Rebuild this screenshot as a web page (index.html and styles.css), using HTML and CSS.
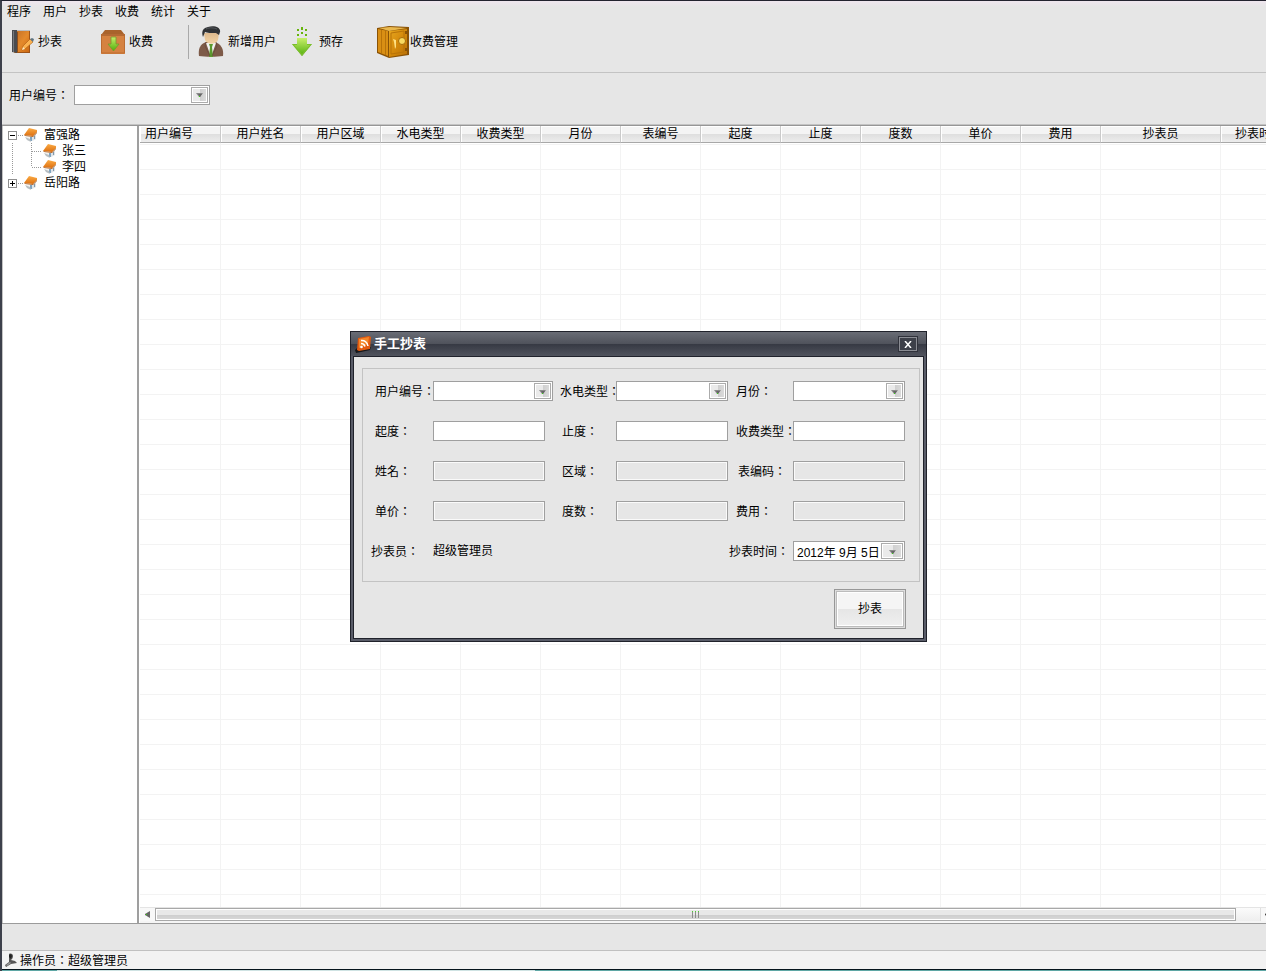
FILE: index.html
```html
<!DOCTYPE html>
<html lang="zh-CN">
<head>
<meta charset="utf-8">
<title>手工抄表</title>
<link rel="stylesheet" href="styles.css">
</head>
<body>
<svg class="defs" width="0" height="0" aria-hidden="true">
  <defs>
    <linearGradient id="roof" x1="0" y1="0" x2="0" y2="1"><stop offset="0" stop-color="#fbab45"/><stop offset="1" stop-color="#dd6f10"/></linearGradient>
    <linearGradient id="leather" x1="0" y1="0" x2="1" y2="1"><stop offset="0" stop-color="#c06d26"/><stop offset=".5" stop-color="#e48a2c"/><stop offset="1" stop-color="#c9640f"/></linearGradient>
    <linearGradient id="leaf" x1="0" y1="0" x2="0" y2="1"><stop offset="0" stop-color="#c8ef6a"/><stop offset="1" stop-color="#4fae0a"/></linearGradient>
    <linearGradient id="gold" x1="0" y1="0" x2="1" y2="1"><stop offset="0" stop-color="#e8a820"/><stop offset=".5" stop-color="#d48a0c"/><stop offset="1" stop-color="#b86f05"/></linearGradient>
    <linearGradient id="face" x1="0" y1="0" x2="0" y2="1"><stop offset="0" stop-color="#ddb98d"/><stop offset="1" stop-color="#f3d3a4"/></linearGradient>
    <symbol id="house" viewBox="0 0 14 15">
      <path d="M2 8l6 1 4-4v6l-4 2-5-1z" fill="#f3f3f1"/>
      <path d="M8 9l4-4v6l-4 2z" fill="#dfe4e8"/>
      <path d="M6 9h2v4H6z" fill="#7fa3c0"/>
      <path d="M10 8h1v3h-1z" fill="#8398aa"/>
      <path d="M1 9l2 3 4 2-1-3z" fill="#b9bfc2"/>
      <path d="M5 0l8 2v2L9 8 0 7z" fill="url(#roof)"/>
      <path d="M0 7l9 1 4-4v1L9 9 1 8z" fill="#b4682a"/>
    </symbol>
    <symbol id="drop" viewBox="0 0 7 5">
      <path d="M0 0h7L4 4H3z" fill="#8a8a8a"/><path d="M2 1h4L4 4z" fill="#666"/><path d="M3 3h1v1H3z" fill="#35d411"/>
    </symbol>
  </defs>
</svg>

<div class="app">
  <nav class="menu">
    <button type="button">程序</button>
    <button type="button">用户</button>
    <button type="button">抄表</button>
    <button type="button">收费</button>
    <button type="button">统计</button>
    <button type="button">关于</button>
  </nav>

  <div class="toolbar">
    <button type="button" class="tool tool-read">
      <svg width="24" height="26" viewBox="0 0 24 26">
        <path d="M2 1h17v2H4z" fill="#b9bcc0"/>
        <path d="M4 2h15v22H3z" fill="url(#leather)"/>
        <path d="M18 2h1v22H4v-1h14z" fill="#9d5418"/>
        <path d="M1 1h5v23l-5-1z" fill="#4a4c50"/>
        <path d="M2.500 2v21" stroke="#77797d" fill="none"/>
        <path d="M6.500 3v20" stroke="#8a4e20" fill="none"/>
        <path d="M19 10l3 3-8 7-3 1 1-4z" fill="#fbb250" stroke="#a85a10" stroke-width=".6"/>
        <path d="M19 10l2-1 2 1-1 3z" fill="#5f7482"/>
        <path d="M11 21l1-3 2 2z" fill="#fde9c4"/>
      </svg>
      <span>抄表</span>
    </button>
    <button type="button" class="tool tool-charge">
      <svg width="24" height="24" viewBox="0 0 24 24">
        <path d="M4 0h16l4 5H0z" fill="#a9632c"/>
        <path d="M0 5h24v19H0z" fill="#d58241"/>
        <path d="M0 4h24v2H0z" fill="#b56a33"/>
        <path d="M1 23h22M.5 6v17M23.500 6v17" stroke="#bd6c31" fill="none"/>
        <path d="M10 7h5v7h3l-5.500 7L7 14h3z" fill="url(#leaf)" stroke="#76972d" stroke-width=".8"/>
      </svg>
      <span>收费</span>
    </button>
    <span class="tool-sep"></span>
    <button type="button" class="tool tool-user">
      <svg width="26" height="32" viewBox="0 0 26 32">
        <path d="M1 30c-1-7 1-12 7-14h9c6 2 9 7 8 14-6 1-18 1-24 0z" fill="#7d5a48"/>
        <path d="M8 17l5 14 5-14z" fill="#f1f1ef"/>
        <path d="M11 18h4l-1 3 1 10h-4l1-10z" fill="#5b9a2e"/>
        <path d="M8 16l-1 4 5 10M18 16l1 4-5 10" stroke="#64463a" stroke-width=".7" fill="none"/>
        <path d="M6 7h15l-1 7c-2 5-11 5-13 0z" fill="url(#face)"/>
        <path d="M5 11C3 5 5 2 10 1c7-2 13 1 12 5l-1 3-3-2c-5 0-9 0-11-1z" fill="#303235"/>
        <path d="M8 3c4-2 8-1 11 0" stroke="#55585c" fill="none"/>
      </svg>
      <span>新增用户</span>
    </button>
    <button type="button" class="tool tool-deposit">
      <svg width="20" height="30" viewBox="0 0 20 30">
        <path d="M9 0h2v3H9zM5 2h2v2H5zM13 2h2v2h-2zM9 5h2v2H9zM5 7h2v2H5zM13 7h2v2h-2z" fill="#67b40c"/>
        <path d="M5 11h10v6h5L10 29 0 17h5z" fill="url(#leaf)"/>
        <path d="M0 17h5v1H2l8 9 8-9h-3v-1h5L10 29z" fill="#7cbd2f"/>
      </svg>
      <span>预存</span>
    </button>
    <button type="button" class="tool tool-manage">
      <svg width="33" height="32" viewBox="0 0 33 32">
        <path d="M0 2l12-2 20 1v28l-20 3L0 27z" fill="#8a5205"/>
        <path d="M1 3l10 2v25l-10-4z" fill="#d98f14"/>
        <path d="M4.500 4v23M8.500 5v24" stroke="#b87309" fill="none"/>
        <path d="M2 2l11-1 17 1-18 3z" fill="#e9b84e"/>
        <path d="M12 5l18-2v25l-18 3z" fill="url(#gold)"/>
        <path d="M14 7l13-2v21l-13 2z" fill="none" stroke="#b87309"/>
        <circle cx="25" cy="15" r="3.500" fill="#f8da62" stroke="#a66a08"/>
        <path d="M16 13l3 1v7l-1 2-1-7z" fill="#ffe083"/>
        <path d="M28 5h4v3h-4zM28 22h4v3h-4z" fill="#8a5205"/>
      </svg>
      <span>收费管理</span>
    </button>
  </div>

  <div class="filter">
    <label for="userNo">用户编号：</label>
    <span class="combo combo-filter"><select id="userNo"><option></option></select><span class="drop"><svg width="7" height="5"><use href="#drop"/></svg></span></span>
  </div>

  <main class="workspace">
    <aside class="tree">
      <div class="node">
        <button type="button" class="toggle" aria-label="折叠"><svg width="7" height="7"><path d="M1 3.500h5" stroke="#000"/></svg></button>
        <svg class="dash" width="7" height="1"><path d="M1 .5h6" stroke="#999" stroke-dasharray="1 1"/></svg>
        <svg width="14" height="15"><use href="#house"/></svg><span>富强路</span>
      </div>
      <div class="node child">
        <svg width="40" height="16"><path d="M9.500 0v16M28.500 0v16M29 8.500h10" stroke="#999" stroke-dasharray="1 1" fill="none"/></svg>
        <svg width="14" height="15"><use href="#house"/></svg><span>张三</span>
      </div>
      <div class="node child">
        <svg width="40" height="16"><path d="M9.500 0v16M28.500 0v8M29 8.500h10" stroke="#999" stroke-dasharray="1 1" fill="none"/></svg>
        <svg width="14" height="15"><use href="#house"/></svg><span>李四</span>
      </div>
      <div class="node">
        <button type="button" class="toggle" aria-label="展开"><svg width="7" height="7"><path d="M1 3.500h5M3.500 1v5" stroke="#000"/></svg></button>
        <svg class="dash" width="7" height="1"><path d="M1 .5h6" stroke="#999" stroke-dasharray="1 1"/></svg>
        <svg width="14" height="15"><use href="#house"/></svg><span>岳阳路</span>
      </div>
    </aside>

    <section class="records">
      <div class="sheet">
        <table>
          <colgroup><col class="c-first"><col span="11" class="c-std"><col class="c-wide"><col class="c-wide"></colgroup>
          <thead>
            <tr><th class="first">用户编号</th><th>用户姓名</th><th>用户区域</th><th>水电类型</th><th>收费类型</th><th>月份</th><th>表编号</th><th>起度</th><th>止度</th><th>度数</th><th>单价</th><th>费用</th><th>抄表员</th><th class="last">抄表时间</th></tr>
          </thead>
          <tbody>
            <tr><td></td><td></td><td></td><td></td><td></td><td></td><td></td><td></td><td></td><td></td><td></td><td></td><td></td><td></td></tr>
          </tbody>
        </table>
      </div>
      <div class="scroll">
        <button type="button" class="scroll-btn" aria-label="向左"><svg width="5" height="7"><path d="M5 0v7L0 4V3z" fill="#666"/><path d="M1 3h1v1H1z" fill="#35d411"/></svg></button>
        <div class="thumb"><i></i><i></i><i></i></div>
        <div class="track"></div>
        <button type="button" class="scroll-btn end" aria-label="向右"><svg width="5" height="7"><path d="M4 0v7L0 4V3z" fill="#444"/></svg></button>
      </div>
    </section>
  </main>

  <div class="strip"></div>
  <footer class="status">
    <svg width="12" height="14" viewBox="0 0 12 14"><path d="M4 1c2-1 4 0 4 2S7 6 6 7l4 1 2 2-6 1-5 3-1-2 4-3z" fill="#555"/><path d="M4 2l2-1 1 2-1 3-2-2z" fill="#222"/><path d="M1 12l4-3 1 1-4 3z" fill="#999"/></svg>
    <span>操作员：超级管理员</span>
  </footer>
</div>

<section class="dialog" role="dialog" aria-labelledby="dlgTitle">
  <header class="dialog-title">
    <svg width="17" height="17" viewBox="0 0 17 17">
      <path d="M0 14l3-3h13l-1 3-9 2-5 1z" fill="#15171b"/>
      <path d="M3 2l11-2 2 1-1 12-11 2-2-1z" fill="#e2590f"/>
      <path d="M4 3l10-2-1 7-9 4z" fill="#f5872a"/>
      <circle cx="6.500" cy="11" r="1.300" fill="#fff"/>
      <path d="M6 7.500c2 0 3.500 1.200 4 3M6 4.500c3.500-.5 6.500 2 7 5.500" stroke="#fff" stroke-width="1.600" fill="none"/>
    </svg>
    <h1 id="dlgTitle">手工抄表</h1>
    <button type="button" class="close" aria-label="关闭"><svg width="8" height="7"><path d="M1 0l6 7M7 0L1 7" stroke="#fff" stroke-width="1.500"/></svg></button>
  </header>
  <form class="dialog-body">
    <fieldset class="form">
      <label for="f1">用户编号：</label>
      <span class="combo combo-user"><select id="f1"><option></option></select><span class="drop"><svg width="7" height="5"><use href="#drop"/></svg></span></span>
      <label for="f2">水电类型：</label>
      <span class="combo"><select id="f2"><option></option></select><span class="drop"><svg width="7" height="5"><use href="#drop"/></svg></span></span>
      <label for="f3">月份：</label>
      <span class="combo"><select id="f3"><option></option></select><span class="drop"><svg width="7" height="5"><use href="#drop"/></svg></span></span>

      <label for="f4">起度：</label><input id="f4" type="text">
      <label for="f5" class="inset">止度：</label><input id="f5" type="text">
      <label for="f6">收费类型：</label><input id="f6" type="text">

      <label for="f7">姓名：</label><input id="f7" type="text" readonly>
      <label for="f8" class="inset">区域：</label><input id="f8" type="text" readonly>
      <label for="f9" class="inset">表编码：</label><input id="f9" type="text" readonly>

      <label for="f10">单价：</label><input id="f10" type="text" readonly>
      <label for="f11" class="inset">度数：</label><input id="f11" type="text" readonly>
      <label for="f12">费用：</label><input id="f12" type="text" readonly>

      <label for="f13" class="outset">抄表员：</label><output id="f13">超级管理员</output>
      <label for="f14" class="date-label">抄表时间：</label>
      <span class="combo combo-date"><input id="f14" type="text" value="2012年 9月 5日"><span class="drop"><svg width="7" height="5"><use href="#drop"/></svg></span></span>
    </fieldset>
    <button type="button" class="submit">抄表</button>
  </form>
</section>
</body>
</html>
```

FILE: styles.css
```css
* { box-sizing: border-box; }

body {
  margin: 0;
  font: 12px/16px "Liberation Sans", "Noto Sans CJK SC", sans-serif;
  color: #000;
  background: #e6e6e6;
}

button, input, select { font: inherit; color: inherit; margin: 0; padding: 0; border-radius: 0; }
button { border: 0; background: none; }
svg { display: block; flex: none; }
.defs { position: absolute; }
/* Traditional locale centres the full-width colon */
label, .status { font-family: "Noto Sans CJK TC", sans-serif; -webkit-locale: "zh-TW"; white-space: nowrap; }

/* Main window */
.app {
  display: flex;
  flex-direction: column;
  height: 100vh;
  overflow: hidden;
  border-top: 1px solid #23232f;
  border-left: 2px solid #3d404b;
}

.menu {
  display: flex;
  gap: 12px;
  padding: 2px 0 0 5px;
  height: 20px;
  line-height: 16px;
  background: linear-gradient(#efe6ee, #e6e6e6 6px);
}

.toolbar {
  display: flex;
  align-items: center;
  height: 52px;
  padding: 0 0 10px 9px;
  border-bottom: 1px solid #c3c3c3;
}
.tool { display: flex; align-items: center; gap: 4px; white-space: nowrap; }
.tool-read { width: 90px; gap: 3px; }
.tool-charge { width: 87px; }
.tool-sep { width: 1px; height: 34px; margin-right: 9px; background: #a9a9a9; }
.tool-user { width: 94px; }
.tool-deposit { width: 85px; gap: 7px; }
.tool-manage { gap: 0; }

.filter {
  display: flex;
  align-items: center;
  gap: 5px;
  height: 52px;
  padding: 0 0 8px 7px;
  border-bottom: 1px solid #c3c3c3;
}

/* Drop-down boxes */
.combo { display: flex; position: relative; width: 112px; height: 20px; }
.combo select, .combo input { width: 100%; height: 100%; appearance: none; }
.combo select, .form input { border: 1px solid #9f9f9f; background: #fff; outline: 0; }
.combo-filter { width: 136px; }
.combo-user { width: 120px; }
.drop {
  position: absolute;
  top: 2px;
  right: 2px;
  display: flex;
  align-items: center;
  justify-content: center;
  width: 17px;
  height: 16px;
  padding-top: 2px;
  border: 1px solid #ababab;
  box-shadow: inset 0 0 0 1px #fff;
  background: linear-gradient(90deg, #eaeaea 55%, #cfcfcf 55%, #dcdcdc);
  pointer-events: none;
}
.combo-date .drop { width: 22px; }

/* Workspace */
.workspace { display: flex; flex: 1; min-height: 0; border-top: 1px solid #969696; border-bottom: 1px solid #9b9b9b; }

.tree {
  width: 137px;
  flex: none;
  padding-top: 1px;
  background: #fff;
  border-left: 1px solid #c3c3c3;
  border-right: 2px solid #9f9f9f;
}
.node { display: flex; align-items: center; height: 16px; white-space: nowrap; }
.node span { margin-left: 6px; }
.node.child span { margin-left: 5px; }
.toggle { display: flex; width: 9px; height: 9px; margin-left: 5px; border: 1px solid #8f8f8f; background: #fff; }
.dash { margin-top: 1px; }

.records { display: flex; flex-direction: column; flex: 1; min-width: 0; padding-left: 1px; background: #fff; }
.sheet { flex: 1; min-height: 0; overflow: hidden; }
table { width: 1201px; height: 100%; table-layout: fixed; border-collapse: separate; border-spacing: 0; }
.c-first { width: 81px; }
.c-std { width: 80px; }
.c-wide { width: 120px; }
th {
  height: 17px;
  padding: 1px 0 0;
  font-weight: normal;
  white-space: nowrap;
  line-height: 15px;
  border-right: 1px solid #cacaca;
  border-bottom: 1px solid #a8a8a8;
  background: linear-gradient(#f4f4f4 50%, #dedede 50%, #ededed);
  box-shadow: inset 1px 1px #fff;
}
.first { text-align: left; padding-left: 5px; }
.last { text-align: left; padding-left: 14px; }
td { padding: 0; border-right: 1px solid #f3f3f3; }
tbody tr { background: repeating-linear-gradient(transparent 0 1px, #f3f3f3 1px 2px, transparent 2px 25px); }

.scroll { display: flex; height: 16px; padding-bottom: 2px; background: #f5f5f5; border-top: 1px solid #e4e4e4; }
.scroll-btn { display: flex; align-items: center; justify-content: center; width: 15px; background: #f8f8f8; }
.thumb {
  display: flex;
  flex: 1;
  align-items: center;
  justify-content: center;
  gap: 2px;
  border: 1px solid #a8a8a8;
  box-shadow: inset 0 0 0 1px #fff;
  background: linear-gradient(#e8e8e8 50%, #cdcdcd 50%, #d8d8d8);
}
.thumb i { width: 1px; height: 7px; background: linear-gradient(#4cd62e 1px, #8d8d8d 1px); }
.track { width: 24px; background: linear-gradient(#fbfbfb, #eee); }
.scroll-btn.end { width: 6px; border-left: 1px solid #e0e0e0; justify-content: flex-start; overflow: hidden; padding-left: 4px; }

.strip { height: 26px; }
.status {
  display: flex;
  align-items: center;
  gap: 3px;
  height: 21px;
  padding: 0 0 2px 3px;
  background: linear-gradient(90deg, #5fa7a5 55px, #cfe3e3 55px 533px, #5fa7a5 533px) bottom / 100% 1px no-repeat, linear-gradient(#06141c, #06141c) 0 calc(100% - 1px) / 100% 1px no-repeat, #f2f2f2;
  border-top: 1px solid #c0c0c0;
}

/* Floating entry window */
.dialog {
  position: absolute;
  left: 350px;
  top: 331px;
  width: 577px;
  border: 1px solid #20222b;
  background: #595c68;
  padding: 0 2px 2px;
}
.dialog-title {
  display: flex;
  align-items: center;
  height: 24px;
  margin: 0 -2px;
  padding: 0 9px 0 4px;
  background: linear-gradient(#696c75, #50535c 48%, #353842 48%, #50535d);
}
.dialog-title h1 { flex: 1; margin: 0 0 0 2px; font-size: 13px; line-height: 16px; color: #fff; }
.close {
  display: flex;
  align-items: center;
  justify-content: center;
  width: 18px;
  height: 14px;
  border: 1px solid #8a8c93;
  outline: 1px solid #30323b;
  background: #3d4049;
}
.dialog-body { padding: 11px 3px 9px 8px; border: 1px solid #20222b; background: #e6e6e6; }

.form {
  display: grid;
  grid-template-columns: 62px 127px 56px 120px 57px 112px;
  grid-auto-rows: 20px;
  row-gap: 20px;
  align-items: center;
  min-width: 0;
  margin: 0;
  padding: 12px 0 20px 8px;
  border: 1px solid #c3c3c3;
}
.form label { padding-bottom: 1px; }
.form label:nth-of-type(3n + 1) { padding-left: 4px; }
.form label.inset { padding-left: 2px; }
.form label.outset { padding-left: 0; }
.form label.date-label { grid-column: 5; justify-self: end; padding: 0 4px 1px 0; }
.form > input { width: 112px; height: 20px; }
.form input { padding: 0 3px; }
.form input[readonly] { background: #e6e6e6; box-shadow: inset 0 0 0 1px #fafafa; }

.submit {
  display: block;
  width: 72px;
  height: 40px;
  margin: 7px 14px 0 auto;
  border: 1px solid #979797;
  box-shadow: inset 0 0 0 1px #dedede, inset 0 0 0 2px #bcbcbc, inset 0 0 0 3px #fff;
  background: linear-gradient(#f5f5f5 50%, #e6e6e6 50%, #f0f0f0);
}
```
